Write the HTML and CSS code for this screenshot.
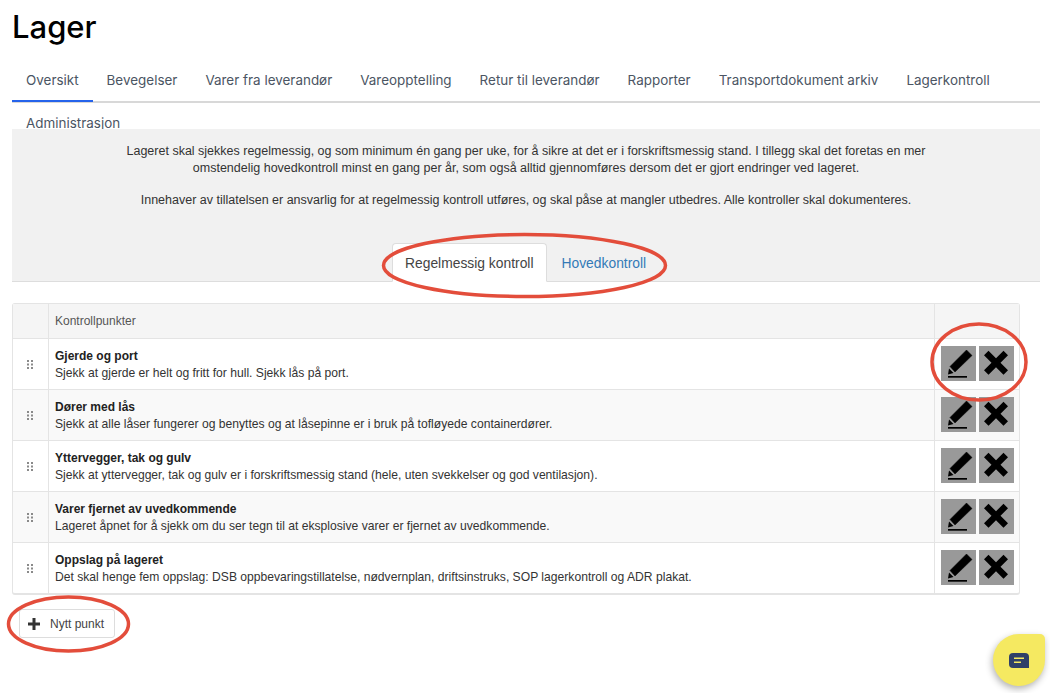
FILE: index.html
```html
<!DOCTYPE html>
<html lang="no">
<head>
<meta charset="utf-8">
<title>Lager</title>
<link rel="stylesheet" href="styles.css">
</head>
<body>
<svg width="0" height="0" class="defs">
  <symbol id="pen" viewBox="0 0 35 35">
    <path d="M25.500 4 L31 9.500 L14 26 L9 20.500 Z" fill="#000" stroke="#000" stroke-width="0.500" stroke-linejoin="round"/>
    <path d="M8 22.500 L12.500 27 L7 28.500 Z" fill="#000"/>
    <rect x="7" y="30" width="19" height="1.700" fill="#000"/>
  </symbol>
  <symbol id="cross" viewBox="0 0 35 35">
    <path d="M9.500 4.800 L17 12.300 L24.500 4.800 L29 9.300 L21.500 16.800 L29 24.300 L24.500 28.800 L17 21.300 L9.500 28.800 L5 24.300 L12.500 16.800 L5 9.300 Z" fill="#000"/>
  </symbol>
  <symbol id="grip" viewBox="0 0 7 9">
    <path d="M0 0h2v2H0zM4 0h2v2H4zM0 3.500h2v2H0zM4 3.500h2v2H4zM0 7h2v2H0zM4 7h2v2H4z" fill="#8a8a8a"/>
  </symbol>
</svg>
<main class="page">
  <h1 class="title">Lager</h1>
  <nav class="tabs">
    <a class="tab active">Oversikt</a>
    <a class="tab">Bevegelser</a>
    <a class="tab">Varer fra leverandør</a>
    <a class="tab">Vareopptelling</a>
    <a class="tab">Retur til leverandør</a>
    <a class="tab">Rapporter</a>
    <a class="tab">Transportdokument arkiv</a>
    <a class="tab">Lagerkontroll</a>
    <a class="tab">Administrasjon</a>
  </nav>
  <section class="panel">
    <p class="intro">Lageret skal sjekkes regelmessig, og som minimum én gang per uke, for å sikre at det er i forskriftsmessig stand. I tillegg skal det foretas en mer<br>omstendelig hovedkontroll minst en gang per år, som også alltid gjennomføres dersom det er gjort endringer ved lageret.</p>
    <p class="intro">Innehaver av tillatelsen er ansvarlig for at regelmessig kontroll utføres, og skal påse at mangler utbedres. Alle kontroller skal dokumenteres.</p>
    <div class="subtabs">
      <a class="subtab current">Regelmessig kontroll</a>
      <a class="subtab">Hovedkontroll</a>
    </div>
  </section>
  <section class="table">
    <div class="row head">
      <div class="cell grip"></div>
      <div class="cell main">Kontrollpunkter</div>
      <div class="cell actions"></div>
    </div>
    <div class="row">
      <div class="cell grip"><svg class="grip-icon"><use href="#grip"/></svg></div>
      <div class="cell main"><strong>Gjerde og port</strong><span>Sjekk at gjerde er helt og fritt for hull. Sjekk lås på port.</span></div>
      <div class="cell actions"><button class="icon-btn"><svg><use href="#pen"/></svg></button><button class="icon-btn"><svg><use href="#cross"/></svg></button></div>
    </div>
    <div class="row">
      <div class="cell grip"><svg class="grip-icon"><use href="#grip"/></svg></div>
      <div class="cell main"><strong>Dører med lås</strong><span>Sjekk at alle låser fungerer og benyttes og at låsepinne er i bruk på tofløyede containerdører.</span></div>
      <div class="cell actions"><button class="icon-btn"><svg><use href="#pen"/></svg></button><button class="icon-btn"><svg><use href="#cross"/></svg></button></div>
    </div>
    <div class="row">
      <div class="cell grip"><svg class="grip-icon"><use href="#grip"/></svg></div>
      <div class="cell main"><strong>Yttervegger, tak og gulv</strong><span>Sjekk at yttervegger, tak og gulv er i forskriftsmessig stand (hele, uten svekkelser og god ventilasjon).</span></div>
      <div class="cell actions"><button class="icon-btn"><svg><use href="#pen"/></svg></button><button class="icon-btn"><svg><use href="#cross"/></svg></button></div>
    </div>
    <div class="row">
      <div class="cell grip"><svg class="grip-icon"><use href="#grip"/></svg></div>
      <div class="cell main"><strong>Varer fjernet av uvedkommende</strong><span>Lageret åpnet for å sjekk om du ser tegn til at eksplosive varer er fjernet av uvedkommende.</span></div>
      <div class="cell actions"><button class="icon-btn"><svg><use href="#pen"/></svg></button><button class="icon-btn"><svg><use href="#cross"/></svg></button></div>
    </div>
    <div class="row">
      <div class="cell grip"><svg class="grip-icon"><use href="#grip"/></svg></div>
      <div class="cell main"><strong>Oppslag på lageret</strong><span>Det skal henge fem oppslag: DSB oppbevaringstillatelse, nødvernplan, driftsinstruks, SOP lagerkontroll og ADR plakat.</span></div>
      <div class="cell actions"><button class="icon-btn"><svg><use href="#pen"/></svg></button><button class="icon-btn"><svg><use href="#cross"/></svg></button></div>
    </div>
  </section>
  <button class="add-btn"><svg viewBox="0 0 12 12"><path d="M4.500 0h3v4.500H12v3H7.500V12h-3V7.500H0v-3h4.500z" fill="#333"/></svg>Nytt punkt</button>
</main>
<svg class="annotations" viewBox="0 0 1050 693">
  <ellipse cx="524.500" cy="265.500" rx="141" ry="31"/>
  <ellipse cx="979" cy="362" rx="47" ry="38"/>
  <ellipse cx="68.500" cy="624" rx="60" ry="27"/>
</svg>
<div class="chat">
  <svg viewBox="0 0 20 15" width="20" height="15">
    <path d="M4 0h12a4 4 0 0 1 4 4v11H4a4 4 0 0 1-4-4V4a4 4 0 0 1 4-4z" fill="#2f4068"/>
    <path d="M5 4.500h10v1.600H5zM5 8.500h7v1.600H5z" fill="#f5e961"/>
  </svg>
</div>
</body>
</html>
```
FILE: styles.css
```css
* { box-sizing: border-box; }
html, body { margin: 0; padding: 0; }
body {
  position: relative;
  width: 1050px;
  height: 693px;
  overflow: hidden;
  background: #fff;
  font-family: "Liberation Sans", Arial, sans-serif;
  color: #333;
}
.defs { position: absolute; }
.page { padding: 0 10px 0 12px; }
.title {
  margin: 0;
  padding-top: 9px;
  height: 58px;
  font-family: Inter, sans-serif;
  font-size: 31px;
  line-height: 36px;
  font-weight: 500;
  color: #000;
}
.tabs {
  display: flex;
  flex-wrap: wrap;
  width: 1028px;
  height: 71px;
  background: linear-gradient(#d8d8d8, #d8d8d8) 0 43px / 100% 2px no-repeat;
}
.tab {
  height: 44px;
  padding: 14px 14px 0;
  font-family: Inter, sans-serif;
  font-size: 13.440px;
  line-height: 16px;
  color: #4b5563;
  border-bottom: 2px solid transparent;
}
.tab.active { border-bottom-color: #2563eb; color: #4b5563; }
.tab:last-child { height: 26px; margin-top: -4px; padding-top: 14px; }
.panel {
  position: relative;
  width: 1028px;
  height: 153px;
  padding-top: 14px;
  background: #f1f1f1;
  border-bottom: 1px solid #ddd;
  font-size: 12.500px;
  line-height: 17px;
  text-align: center;
}
.intro { margin: 0 0 15px; color: #333; }
.subtabs {
  position: absolute;
  left: 380px;
  bottom: -1px;
  display: flex;
  font-size: 13.850px;
  line-height: 20px;
}
.subtab {
  height: 39px;
  padding: 9px 12px;
  color: #337ab7;
  border: 1px solid transparent;
}
.subtab.current {
  color: #444;
  background: #fff;
  border-color: #ddd #ddd #fff;
  border-radius: 4px 4px 0 0;
}
.subtab + .subtab { margin-left: 2px; }
.table {
  width: 1008px;
  margin-top: 21px;
  border: 1px solid #e4e4e4;
  border-bottom-width: 2px;
  border-radius: 3px;
  font-size: 12.130px;
  line-height: 17px;
}
.row {
  display: flex;
  height: 51px;
  border-bottom: 1px solid #e4e4e4;
}
.row:last-child { height: 50px; border-bottom: 0; }
.row:nth-child(odd) { background: #f9f9f9; }
.row.head { height: 35px; background: #f5f5f5; color: #555; font-size: 12px; }
.cell { display: flex; }
.cell.grip { width: 36px; align-items: center; justify-content: center; border-right: 1px solid #e4e4e4; }
.grip-icon { width: 7px; height: 9px; }
.cell.main {
  width: 886px;
  flex-direction: column;
  justify-content: center;
  padding: 2px 0 0 6px;
  border-right: 1px solid #e4e4e4;
}
.row.head .cell.main { padding-top: 0; }
.cell.main strong { color: #222; font-size: 12px; }
.cell.actions { align-items: center; gap: 3px; padding: 0 0 2px 6px; }
.icon-btn {
  width: 35px;
  height: 35px;
  padding: 0;
  border: 0;
  background: #999;
}
.icon-btn svg { display: block; width: 35px; height: 35px; }
.add-btn {
  display: flex;
  align-items: center;
  gap: 10px;
  width: 96px;
  height: 29px;
  margin: 14px 0 0 7px;
  padding: 0 0 0 8px;
  background: #fff;
  border: 1px solid #ddd;
  border-radius: 3px;
  font-family: "Liberation Sans", Arial, sans-serif;
  font-size: 12px;
  color: #444;
}
.add-btn svg { width: 12px; height: 12px; }
.annotations {
  position: absolute;
  left: 0;
  top: 0;
  width: 1050px;
  height: 693px;
  pointer-events: none;
}
.annotations ellipse { fill: none; stroke: #e34d3b; stroke-width: 3.500px; }
.chat {
  position: absolute;
  left: 993px;
  top: 634px;
  width: 52px;
  height: 52px;
  display: flex;
  align-items: center;
  justify-content: center;
  background: #f5e961;
  border-radius: 50% 5px 50% 50%;
  box-shadow: -1px 3px 7px rgba(0, 0, 0, 0.3);
}
```
